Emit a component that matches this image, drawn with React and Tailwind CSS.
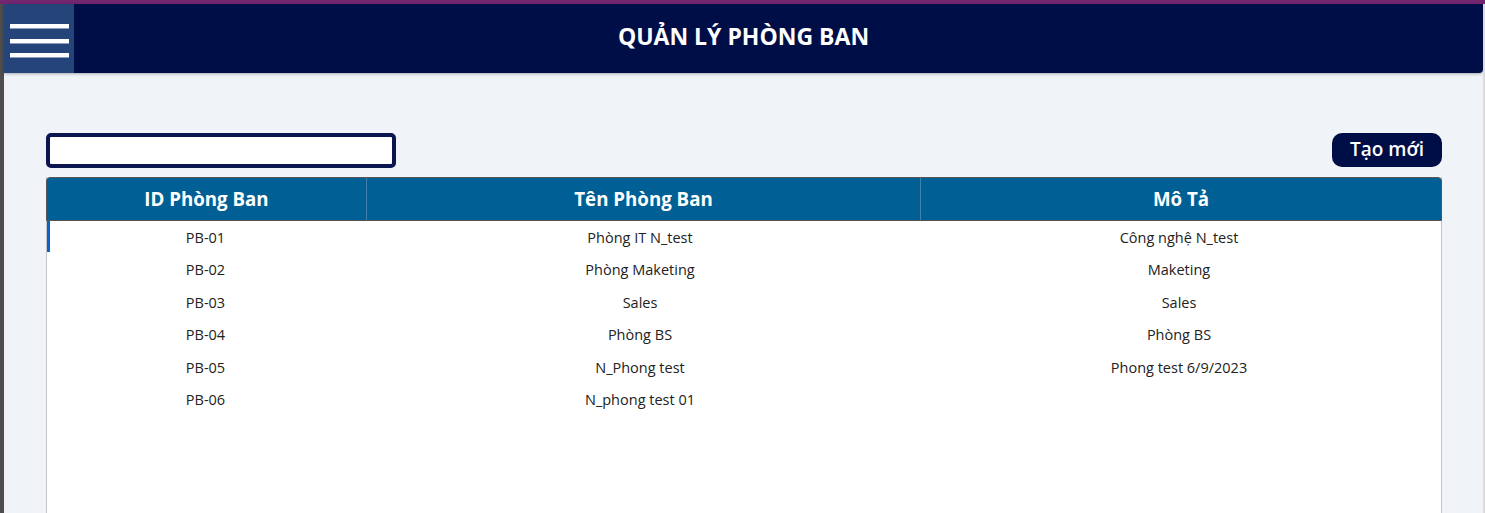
import React from "react";

const rows = [
  { id: "PB-01", name: "Phòng IT N_test", desc: "Công nghệ N_test" },
  { id: "PB-02", name: "Phòng Maketing", desc: "Maketing" },
  { id: "PB-03", name: "Sales", desc: "Sales" },
  { id: "PB-04", name: "Phòng BS", desc: "Phòng BS" },
  { id: "PB-05", name: "N_Phong test", desc: "Phong test 6/9/2023" },
  { id: "PB-06", name: "N_phong test 01", desc: "" },
];

const App = () => {
  return (
    <div
      className="w-[1485px] h-[513px] overflow-hidden flex flex-col bg-[#f0f3f8]"
      style={{ fontFamily: '"Open Sans", "Noto Sans", sans-serif' }}
    >
      <div className="h-[4px] bg-[#74256f] shrink-0"></div>
      <div className="flex flex-1 min-h-0">
        <div className="w-[4px] bg-[#4d4d4d] shrink-0"></div>
        <div className="flex-1 flex flex-col min-w-0">
          {/* header */}
          <div className="h-[69px] shrink-0 grid grid-cols-[70px_1fr_70px] bg-[#000e47] rounded-br-[4px] shadow-[0_1px_3px_rgba(0,0,0,0.3)]">
            <div className="bg-[#25457a] flex flex-col justify-center items-center gap-[10.5px] pt-[4px]">
              <div className="w-[59px] h-[4px] bg-white shadow-[0_1px_0_#8a9cc4]"></div>
              <div className="w-[59px] h-[4px] bg-white shadow-[0_1px_0_#8a9cc4]"></div>
              <div className="w-[59px] h-[4px] bg-white shadow-[0_1px_0_#8a9cc4]"></div>
            </div>
            <div className="flex items-center justify-center text-white font-bold text-[23px] pb-[4px]">
              QUẢN LÝ PHÒNG BAN
            </div>
            <div></div>
          </div>

          {/* content */}
          <div className="flex-1 flex flex-col pl-[42px] pr-[41px] pt-[60px] min-h-0">
            <div className="flex items-start justify-between h-[35px] shrink-0">
              <input
                type="text"
                className="w-[350px] h-[35px] bg-white border-[4px] border-[#0b1550] rounded-[5px] outline-none"
              />
              <button className="w-[110px] h-[34px] bg-[#000e47] text-white rounded-[10px] text-[19px] font-semibold leading-none pb-[2px]">
                Tạo mới
              </button>
            </div>

            <div className="mt-[9px] flex-1 flex flex-col bg-white border-x border-[#c4c4c4]">
              <div className="h-[44px] shrink-0 grid grid-cols-[320px_554px_1fr] bg-[#005f94] text-white font-bold text-[18.7px] rounded-t-[4px] border border-[#555] -mx-px">
                <div className="flex items-center justify-center border-r border-[#3f82ae]">ID Phòng Ban</div>
                <div className="flex items-center justify-center border-r border-[#3f82ae]">Tên Phòng Ban</div>
                <div className="flex items-center justify-center">Mô Tả</div>
              </div>
              <div className="flex flex-col">
                {rows.map((r, i) => (
                  <div
                    key={r.id}
                    className="relative h-[32.5px] grid grid-cols-[319px_554px_1fr] text-[14.5px] text-[#222] pt-[1px]"
                  >
                    {i === 0 && (
                      <div className="absolute left-0 top-0 w-[3px] h-[31px] bg-[#0a64c8]"></div>
                    )}
                    <div className="flex items-center justify-center pr-[2px]">{r.id}</div>
                    <div className="flex items-center justify-center pr-[6px]">{r.name}</div>
                    <div className="flex items-center justify-center pr-[3px]">{r.desc}</div>
                  </div>
                ))}
              </div>
            </div>
          </div>
        </div>
        <div className="w-[2px] bg-[#dcdcdc] shrink-0"></div>
      </div>
    </div>
  );
};

export default App;
